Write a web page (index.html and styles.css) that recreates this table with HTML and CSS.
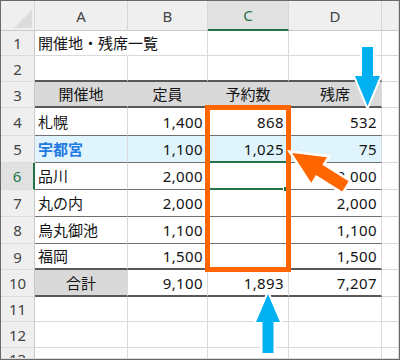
FILE: index.html
```html
<!DOCTYPE html>
<html lang="ja">
<head>
<meta charset="utf-8">
<title>開催地・残席一覧</title>
<link rel="stylesheet" href="styles.css">
</head>
<body>
<div class="frame">
  <div class="sheet">
    <div class="hd corner"><svg width="33" height="29" viewBox="0 0 33 29"><polygon points="31,9 31,27 13,27" fill="#dcdcdc"/></svg></div>
    <div class="hd">A</div>
    <div class="hd">B</div>
    <div class="hd selcol">C</div>
    <div class="hd">D</div>
    <div class="hd"></div>

    <div class="hd rh">1</div>
    <div class="c txt over">開催地・残席一覧</div>
    <div class="c"></div><div class="c"></div><div class="c"></div><div class="c"></div>

    <div class="hd rh">2</div>
    <div class="c bk"></div><div class="c bk"></div><div class="c bk"></div><div class="c bk"></div><div class="c"></div>

    <div class="hd rh">3</div>
    <div class="c th bk">開催地</div>
    <div class="c th bk">定員</div>
    <div class="c th bk">予約数</div>
    <div class="c th bk">残席</div>
    <div class="c"></div>

    <div class="hd rh">4</div>
    <div class="c txt t">札幌</div>
    <div class="c num t">1,400</div>
    <div class="c num t">868</div>
    <div class="c num t">532</div>
    <div class="c"></div>

    <div class="hd rh">5</div>
    <div class="c txt t hl strong">宇都宮</div>
    <div class="c num t hl">1,100</div>
    <div class="c num t hl">1,025</div>
    <div class="c num t hl">75</div>
    <div class="c"></div>

    <div class="hd rh selrow">6</div>
    <div class="c txt t">品川</div>
    <div class="c num t">2,000</div>
    <div class="c num t"></div>
    <div class="c num t">2,000</div>
    <div class="c"></div>

    <div class="hd rh">7</div>
    <div class="c txt t">丸の内</div>
    <div class="c num t">2,000</div>
    <div class="c num t"></div>
    <div class="c num t">2,000</div>
    <div class="c"></div>

    <div class="hd rh">8</div>
    <div class="c txt t">烏丸御池</div>
    <div class="c num t">1,100</div>
    <div class="c num t"></div>
    <div class="c num t">1,100</div>
    <div class="c"></div>

    <div class="hd rh">9</div>
    <div class="c txt bk">福岡</div>
    <div class="c num bk">1,500</div>
    <div class="c num bk"></div>
    <div class="c num bk">1,500</div>
    <div class="c"></div>

    <div class="hd rh">10</div>
    <div class="c th bk">合計</div>
    <div class="c num bk">9,100</div>
    <div class="c num bk">1,893</div>
    <div class="c num bk">7,207</div>
    <div class="c"></div>

    <div class="hd rh">11</div>
    <div class="c"></div><div class="c"></div><div class="c"></div><div class="c"></div><div class="c"></div>

    <div class="hd rh">12</div>
    <div class="c"></div><div class="c"></div><div class="c"></div><div class="c"></div><div class="c"></div>

    <div class="hd rh last">13</div>
    <div class="c"></div><div class="c"></div><div class="c"></div><div class="c"></div><div class="c"></div>
  </div>

  <svg class="overlay" width="400" height="360" viewBox="0 0 400 360">
    <rect x="207" y="162" width="82" height="27" fill="none" stroke="#217346" stroke-width="2"/>
    <rect x="283.5" y="186.5" width="5" height="5" fill="#217346" stroke="#fff" stroke-width="1"/>
    <rect x="207.5" y="107.5" width="81" height="162" fill="none" stroke="#ff6600" stroke-width="5"/>
    <polygon points="362,47 373,47 373,76 380,76 367.5,106 355,76 362,76" fill="#00b0f0" stroke="#fff" stroke-width="4" paint-order="stroke" stroke-linejoin="miter"/>
    <polygon points="268,294 280,322 273.5,322 273.5,353 262.5,353 262.5,322 256,322" fill="#00b0f0" stroke="#fff" stroke-width="4" paint-order="stroke"/>
    <g transform="translate(292 153) rotate(32)">
      <polygon points="0,0 32,-15 32,-6 63,-6 63,6 32,6 32,15" fill="#ff6600" stroke="#fff" stroke-width="5" paint-order="stroke" stroke-linejoin="miter"/>
    </g>
  </svg>
</div>
</body>
</html>
```

FILE: styles.css
```css
* {
  box-sizing: border-box;
  margin: 0;
  padding: 0;
}

body {
  margin: 0;
  background: #ffffff;
  font-family: "Noto Sans", "Noto Sans CJK JP", sans-serif;
}

.frame {
  position: relative;
  width: 400px;
  height: 360px;
  overflow: hidden;
}

.sheet {
  width: 400px;
  height: 360px;
  border: 1px solid #6a6a6a;
  display: grid;
  grid-template-columns: 34px 93px 80px 81px 93px 17px;
  grid-template-rows: 30px 25px 26px 26px 28px 27px 27px 27px 27px 26px 27px 25px 26px 11px;
  overflow: hidden;
}

.c {
  border-right: 1px solid #dadada;
  border-bottom: 1px solid #dadada;
  font-size: 15px;
  line-height: 20px;
  color: #141414;
  display: flex;
  align-items: center;
  padding: 0 4px;
  white-space: nowrap;
  overflow: hidden;
}

.txt {
  padding-left: 3px;
}

.over {
  overflow: visible;
  border-right-color: transparent;
  position: relative;
  z-index: 1;
}

.num {
  justify-content: flex-end;
  letter-spacing: 0.4px;
  padding-right: 4px;
}

.t {
  border-bottom: 1px solid #707070;
}

.bk {
  border-bottom: 2px solid #585858;
}

.th {
  background: #d9d9d9;
  border-right-color: #d9d9d9;
  justify-content: center;
}

.hl {
  background: #dff4fc;
}

.strong {
  font-weight: 700;
  color: #1f7ae3;
}

.hd {
  background: #efefef;
  color: #444444;
  font-size: 15px;
  line-height: 20px;
  display: flex;
  align-items: center;
  justify-content: center;
  border-right: 1px solid #d6d6d6;
  border-bottom: 1px solid #c9c9c9;
}

.corner {
  align-items: flex-start;
  justify-content: flex-start;
}

.rh {
  border-right: 1px solid #c9c9c9;
  border-bottom: 1px solid #dcdcdc;
}

.selcol {
  background: #e1e1e1;
  color: #217346;
  border-bottom: 2px solid #217346;
}

.selrow {
  background: #e1e1e1;
  color: #217346;
  border-right: 2px solid #217346;
}

.last {
  align-items: flex-start;
  padding-top: 1px;
  overflow: hidden;
}

.overlay {
  position: absolute;
  left: 0;
  top: 0;
  pointer-events: none;
}
```
